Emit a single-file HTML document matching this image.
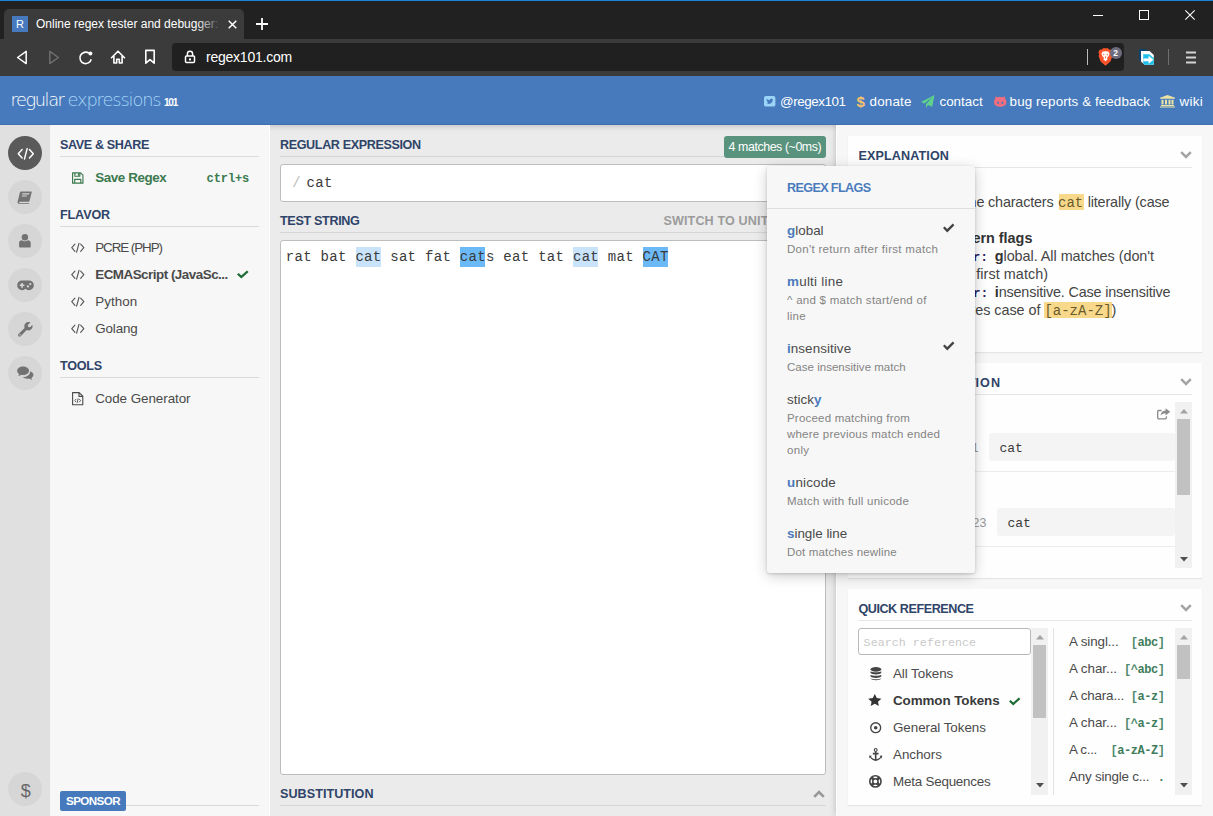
<!DOCTYPE html>
<html lang="en">
<head>
<meta charset="utf-8">
<title>Online regex tester and debugger: PHP, PCRE, Python, Golang and JavaScript</title>
<style>
*{box-sizing:border-box;margin:0;padding:0}
html,body{width:1213px;height:816px;overflow:hidden}
html{background:#ebebeb}
body{position:relative;font-family:"Liberation Sans",sans-serif;font-size:13px;color:#4a4a4a}
.abs{position:absolute}
.grp{position:absolute;left:0;top:0;width:1213px;height:816px}
.mono{font-family:"Liberation Mono",monospace}
svg{display:block;position:absolute;overflow:visible}
.t{position:absolute;white-space:nowrap;line-height:1}
/* browser chrome */
#topline{left:0;top:0;width:1213px;height:1px;background:#1b84d8}
#tabstrip{left:0;top:1px;width:1213px;height:38px;background:#212121}
#tab{left:4px;top:9px;width:240px;height:31px;background:#3b3b3b;border-radius:5px 5px 0 0}
#toolbar{left:0;top:39px;width:1213px;height:37px;background:#3b3b3b}
#urlbox{left:172px;top:43px;width:952px;height:28px;background:#202020;border-radius:4px}
#favicon{left:12px;top:16px;width:16px;height:16px;background:#4679bd;color:#fff;font-size:11px;text-align:center;line-height:16px}
/* header */
#hdr{z-index:5}
#flags{z-index:6}
#hdrbg{left:0;top:76px;width:1213px;height:49px;background:#467abc;border-bottom:1px solid #3e70b2}
.lnk{color:#fff;font-size:13.4px;top:94.6px}
/* rail */
#railbg{left:0;top:125px;width:50px;height:691px;background:#e0e0e0;z-index:-1}
.circ{position:absolute;left:8px;width:34px;height:34px;border-radius:50%;background:#d6d6d6}
.circ.on{background:#5a5a5a}
/* panels */
#leftbg{left:50px;top:125px;width:220px;height:691px;background:#f7f7f7;border-right:1px solid #fdfdfd;z-index:-1}
#centerbg{left:270px;top:125px;width:566px;height:691px;background:#ebebeb;z-index:-3}
#hdrshadow{left:0;top:76px;width:1213px;height:49px;box-shadow:0 1px 6px rgba(0,0,0,.2);z-index:-2}
#rightbg{left:836px;top:125px;width:377px;height:691px;background:#f7f7f7;border-left:1px solid #fdfdfd;box-shadow:0 0 6px rgba(0,0,0,.22);z-index:-1}
.h{position:absolute;white-space:nowrap;font-weight:700;font-size:12.6px;line-height:1;color:#2f4468}
.hr{position:absolute;height:1px;background:#dadada}
.li{position:absolute;white-space:nowrap;font-size:13.4px;line-height:1;color:#4a4a4a}
.box{position:absolute;background:#fff;border:1px solid #bdbdbd;border-radius:3px}
.card{position:absolute;left:848px;width:354px;background:#fefefe;box-shadow:0 1px 1px rgba(0,0,0,.07)}
.sbar{position:absolute;width:17px;background:#f1f1f1}
.thumb{position:absolute;left:2px;width:13px;background:#c1c1c1}
.ex{position:absolute;white-space:nowrap;font-size:14.4px;line-height:1;color:#454545}
.tok{font-family:"Liberation Mono",monospace;font-size:14px;background:#f8d98b;color:#6a5a2c}
.mod{font-family:"Liberation Mono",monospace;font-size:13px;font-weight:700;color:#2b2160}
/* popup */
#popup{left:767px;top:166px;width:208px;height:407px;background:#f7f7f7;border-radius:3px;box-shadow:0 1px 3px rgba(0,0,0,.16),0 3px 14px rgba(0,0,0,.2)}
.fn{position:absolute;left:787px;white-space:nowrap;font-size:13.4px;line-height:1;color:#4a4a4a}
.fn b{color:#4a7bbd}
.fd{position:absolute;left:787px;font-size:11.5px;line-height:1;color:#848484;white-space:nowrap}
.qt{position:absolute;white-space:nowrap;line-height:1;font-family:"Liberation Mono",monospace;font-size:12px;letter-spacing:-.45px;font-weight:700;color:#3f7d5c;right:48.4px}
.qt i{font-style:normal;color:#4f8a6c}
</style>
</head>
<body>
<!-- ===== browser chrome ===== -->
<div class="grp" id="chrome">
<div class="abs" id="tabstrip"></div>
<div class="abs" id="topline"></div>
<div class="abs" id="tab"></div>
<div class="abs" id="toolbar"></div>
<div class="abs" id="urlbox"></div>
<div class="abs" id="favicon">R</div>
<div class="t" id="tabtitle" style="left:36px;top:14.00px;font-size:12px;line-height:20px;height:20px;color:#fff;width:182px;overflow:hidden">Online regex tester and debugger: PHP, PCRE</div>
<div class="t" id="urltext" style="letter-spacing:-0.23px;left:206px;top:50.00px;font-size:14px;color:#fff">regex101.com</div>
<div class="abs" style="left:196px;top:10px;width:26px;height:28px;background:linear-gradient(90deg,rgba(59,59,59,0),#3b3b3b)"></div>
<svg style="left:228px;top:20px" width="9" height="9" viewBox="0 0 9 9"><path d="M0.7 0.7L8.3 8.3M8.3 0.7L0.7 8.3" stroke="#fff" stroke-width="1.5" fill="none"/></svg>
<svg style="left:256px;top:18px" width="12" height="12" viewBox="0 0 12 12"><path d="M6 0V12M0 6H12" stroke="#fff" stroke-width="1.8" fill="none"/></svg>
<div class="abs" style="left:1093px;top:15px;width:10px;height:1px;background:#fff"></div>
<svg style="left:1139px;top:10px" width="10" height="10" viewBox="0 0 10 10"><rect x="0.5" y="0.5" width="9" height="9" stroke="#fff" stroke-width="1" fill="none"/></svg>
<svg style="left:1185px;top:10px" width="10" height="10" viewBox="0 0 10 10"><path d="M0.3 0.3L9.7 9.7M9.7 0.3L0.3 9.7" stroke="#fff" stroke-width="1.1" fill="none"/></svg>
<svg style="left:16px;top:50px" width="12" height="15" viewBox="0 0 12 15"><path d="M10.2 1.4V13.6L1.6 7.5Z" stroke="#fff" stroke-width="1.5" fill="none" stroke-linejoin="round"/></svg>
<svg style="left:48px;top:50px" width="12" height="15" viewBox="0 0 12 15"><path d="M1.8 1.4V13.6L10.4 7.5Z" stroke="#6e6e6e" stroke-width="1.5" fill="none" stroke-linejoin="round"/></svg>
<svg style="left:78px;top:50px" width="16" height="15" viewBox="0 0 16 15"><path d="M13.2 9.2A5.7 5.7 0 1 1 10.9 3.2" stroke="#fff" stroke-width="1.6" fill="none"/><circle cx="12.4" cy="3.6" r="2" fill="#fff"/></svg>
<svg style="left:110px;top:49px" width="16" height="16" viewBox="0 0 16 16"><path d="M1.5 8.8L8 2.2L14.5 8.8M3.9 7.2V14H6.7V10.2H9.3V14H12.1V7.2" stroke="#fff" stroke-width="1.6" fill="none" stroke-linejoin="round" stroke-linecap="round"/></svg>
<svg style="left:144px;top:49px" width="12" height="16" viewBox="0 0 12 16"><path d="M1.8 1.4H10.2V14.2L6 10.6L1.8 14.2Z" stroke="#fff" stroke-width="1.6" fill="none" stroke-linejoin="round"/></svg>
<svg style="left:184px;top:50px" width="12" height="14" viewBox="0 0 12 14"><path d="M3.4 6V3.8A2.6 2.6 0 0 1 8.6 3.8V6" stroke="#fff" stroke-width="1.5" fill="none"/><rect x="1.5" y="6" width="9" height="6.6" rx="1" stroke="#fff" stroke-width="1.5" fill="none"/><rect x="5" y="8.4" width="2" height="2" fill="#fff"/></svg>
<div class="abs" style="left:1087px;top:49px;width:1px;height:16px;background:#bbb"></div>
<svg style="left:1098px;top:48px" width="15" height="18" viewBox="0 0 15 18"><path d="M7.5 0.3L10 0.3L11.3 1.8L13.2 1.5L14.6 4.2L13.9 6.2L14.4 8L12.4 13.6L7.5 17.7L2.6 13.6L0.6 8L1.1 6.2L0.4 4.2L1.8 1.5L3.7 1.8L5 0.3Z" fill="#fb542b"/><path d="M7.5 3.2L10.2 3.6L11.6 5.8L10.4 8.6L9 10L9.6 11.6L7.5 13.2L5.4 11.6L6 10L4.6 8.6L3.4 5.8L4.8 3.6Z" fill="#fff"/><path d="M5 5.6L6.6 6.4L5.6 7.4ZM10 5.6L8.4 6.4L9.4 7.4ZM6.8 8.4H8.2L7.5 11Z" fill="#fb542b"/></svg>
<div class="abs" style="left:1110px;top:47px;width:12px;height:12px;border-radius:6px;background:#6c6c7e"></div>
<div class="t" style="left:1113.3px;top:49px;font-size:8.5px;font-weight:700;color:#fff">2</div>
<svg style="left:1139px;top:49px" width="16" height="17" viewBox="0 0 16 17"><path d="M0 0H6.4L9.4 2.6V11.8H0Z" fill="#0b446e"/><path d="M2 2H10.6L14.8 6V15.8H5.6L2 12.4Z" fill="#fff"/><path d="M4.2 5.2H10.4L14.8 9.2V15.8H5.6L4.2 14.4Z" fill="#1fc1ea"/><path d="M4.4 9.4H9.6V6.8L14.4 10.8L9.6 14.8V12.2H4.4Z" fill="#fff"/></svg>
<div class="abs" style="left:1168px;top:49px;width:1px;height:16px;background:#707070"></div>
<svg style="left:1186px;top:51px" width="10" height="13" viewBox="0 0 10 13"><path d="M0 1.4H10M0 6.5H10M0 11.6H10" stroke="#d4d4d4" stroke-width="2"/></svg>
</div>
<!-- ===== site header ===== -->
<div class="grp" id="hdr">
<div class="abs" id="hdrbg"></div>
<div class="t" id="logo1" style="letter-spacing:-1.42px;left:10.5px;top:91.00px;font-family:'DejaVu Sans Light','DejaVu Sans',sans-serif;font-weight:200;font-size:17.8px;color:#fff">regular</div>
<div class="t" id="logo2" style="letter-spacing:-1.11px;left:67.5px;top:91.00px;font-family:'DejaVu Sans Light','DejaVu Sans',sans-serif;font-weight:200;font-size:17.8px;color:#a9d6f7">expressions</div>
<div class="t" id="logo3" style="letter-spacing:-1.23px;left:164px;top:98.01px;font-size:10px;font-weight:700;color:#fff">101</div>
<svg style="left:764px;top:96px" width="11.4" height="10.6" viewBox="0 0 11 11" preserveAspectRatio="none"><rect width="11" height="11" rx="2" fill="#9ad4f7"/><path d="M2 7.9C4.8 9.4 8.4 7.6 8.3 4.4L9 3.6L8.2 3.7L8.7 2.9L7.9 3.2C7.2 2.5 5.7 2.8 5.7 4.2C4.4 4.2 3.3 3.5 2.7 2.8C2.3 3.6 2.6 4.4 3.1 4.8L2.5 4.7C2.6 5.5 3.1 6 3.8 6.2L3.2 6.3C3.5 6.9 4 7.2 4.6 7.2C3.8 7.8 2.9 8 2 7.9Z" fill="#467abc"/></svg>
<div class="t lnk" style="letter-spacing:-0.44px;left:780px;top:95.01px">@regex101</div>
<div class="t" style="left:856.6px;top:94.00px;font-size:15px;font-weight:700;color:#f7c36f">$</div>
<div class="t lnk" style="letter-spacing:0.17px;left:869.6px;top:95.01px">donate</div>
<svg style="left:921px;top:94.5px" width="13.5" height="13.3" viewBox="0 0 14 13" preserveAspectRatio="none"><path d="M14 0L11.6 11.6L7.2 9.8L5.2 12.8V9L12 2L3.6 8.4L0 6.9Z" fill="#5fd38a"/></svg>
<div class="t lnk" style="letter-spacing:0.04px;left:939.4px;top:95.01px">contact</div>
<svg style="left:993.5px;top:96px" width="12.4" height="10.8" viewBox="0 0 13 11" preserveAspectRatio="none"><path d="M1.6 0.2L3.6 1.2C5.4 0.8 7.6 0.8 9.4 1.2L11.4 0.2L11.6 2.6C12.6 3.8 13 5 13 6.2C13 9.6 10.2 11 6.5 11C2.8 11 0 9.6 0 6.2C0 5 0.4 3.8 1.4 2.6Z" fill="#f26d7d"/><ellipse cx="4.2" cy="7" rx="1" ry="1.5" fill="#467abc"/><ellipse cx="8.8" cy="7" rx="1" ry="1.5" fill="#467abc"/></svg>
<div class="t lnk" style="letter-spacing:0.09px;left:1009.6px;top:95.01px">bug reports &amp; feedback</div>
<svg style="left:1160px;top:95px" width="15" height="12.4" viewBox="0 0 15 13" preserveAspectRatio="none"><path d="M7.5 0L15 3V4H0V3ZM1.5 5H3.5V10H1.5ZM5 5H7V10H5ZM8.5 5H10.5V10H8.5ZM11.5 5H13.5V10H11.5ZM1 10.5H14V11.5H1ZM0 12H15V13H0Z" fill="#e9e4a6"/></svg>
<div class="t lnk" style="letter-spacing:0.29px;left:1179.6px;top:95.01px">wiki</div>
</div>
<!-- ===== rail ===== -->
<div class="grp" id="rail">
<div class="abs" id="railbg"></div>
<div class="circ on" style="top:136px"></div>
<svg style="left:16.5px;top:147.5px" width="17.6" height="11.6" viewBox="0 0 18 12"><path d="M5.2 1.6L1.2 6L5.2 10.4M12.8 1.6L16.8 6L12.8 10.4M10.4 0.6L7.6 11.4" stroke="#fff" stroke-width="1.5" fill="none" stroke-linecap="round" stroke-linejoin="round"/></svg>
<div class="circ" style="top:180px"></div>
<svg style="left:17.4px;top:190.6px" width="15" height="12.8" viewBox="0 0 15 13"><path d="M4.4 0.4H14.2C14.8 0.4 15 0.8 14.8 1.4L12.6 10.2C12.4 10.8 12 11 11.4 11H2.6C2.2 11 2 11.3 2 11.6C2 11.9 2.2 12.1 2.6 12.1H12.2V12.9H2C0.8 12.9 0.2 12 0.5 10.9L2.8 1.6C3 0.8 3.6 0.4 4.4 0.4ZM5.4 2.4L5.1 3.5H12.3L12.6 2.4ZM4.9 4.5L4.6 5.6H9.8L10.1 4.5Z" fill="#727272" fill-rule="evenodd"/></svg>
<div class="circ" style="top:224px"></div>
<svg style="left:19.2px;top:234.4px" width="11.8" height="13.6" viewBox="0 0 12 14"><circle cx="6" cy="3.3" r="3.3" fill="#727272"/><path d="M0 13V9.2C0 7.4 1.4 6.4 2.8 6.4C3.6 7 4.8 7.4 6 7.4C7.2 7.4 8.4 7 9.2 6.4C10.6 6.4 12 7.4 12 9.2V13C12 13.6 11.6 14 11 14H1C0.4 14 0 13.6 0 13Z" fill="#727272"/></svg>
<div class="circ" style="top:268px"></div>
<svg style="left:16.6px;top:279.6px" width="17" height="10.8" viewBox="0 0 17 11"><path d="M5 0.4H12A5 5 0 0 1 12 10.4C10.8 10.4 9.8 10 9 9.2H8C7.2 10 6.2 10.4 5 10.4A5 5 0 0 1 5 0.4Z" fill="#727272"/><path d="M4.2 3V4.6H2.6V6.2H4.2V7.8H5.8V6.2H7.4V4.6H5.8V3Z" fill="#d6d6d6"/><circle cx="11" cy="6.6" r="1.15" fill="#d6d6d6"/><circle cx="13.4" cy="4.2" r="1.15" fill="#d6d6d6"/></svg>
<div class="circ" style="top:312px"></div>
<svg style="left:18px;top:321.6px" width="15" height="15" viewBox="0 0 15 15"><path d="M14.6 4.2C14.6 6.6 12.6 8.4 10.4 8.4C9.8 8.4 9.2 8.3 8.7 8.1L2.6 14.2C2 14.8 1 14.8 0.5 14.2C-0.1 13.6 -0.1 12.7 0.5 12.1L6.6 6C6.4 5.5 6.3 4.9 6.3 4.3C6.3 1.9 8.2 0.1 10.5 0.1C11.2 0.1 11.8 0.2 12.4 0.5L9.8 3.1L10.2 4.9L12 5.3L14.3 2.9C14.5 3.3 14.6 3.8 14.6 4.2ZM2 13.4A0.7 0.7 0 1 0 2 12A0.7 0.7 0 0 0 2 13.4Z" fill="#727272" fill-rule="evenodd"/></svg>
<div class="circ" style="top:356px"></div>
<svg style="left:16.8px;top:366.4px" width="16.6" height="13.4" viewBox="0 0 17 14"><path d="M6.2 0.4C9.6 0.4 12.4 2.4 12.4 4.9C12.4 7.4 9.6 9.4 6.2 9.4C5.6 9.4 5 9.3 4.5 9.2C3.6 9.9 2.4 10.4 1 10.5C1.6 9.9 2 9.2 2.2 8.4C0.9 7.6 0 6.3 0 4.9C0 2.4 2.8 0.4 6.2 0.4Z" fill="#727272"/><path d="M13.7 5.4C15.6 6.2 17 7.6 17 9.2C17 10.6 16.1 11.8 14.8 12.6C15 13.3 15.4 13.8 16 14.4C14.6 14.3 13.4 13.8 12.5 13.1C12 13.2 11.4 13.3 10.8 13.3C8.8 13.3 7 12.6 5.9 11.5C6 11.5 6.1 11.5 6.2 11.5C10.4 11.5 13.8 8.8 13.7 5.4Z" fill="#727272"/></svg>
<div class="circ" style="top:772px"></div>
<div class="t" style="left:20.8px;top:782.00px;font-size:18px;color:#666">$</div>
</div>
<!-- ===== left panel ===== -->
<div class="grp" id="left">
<div class="abs" id="leftbg"></div>
<div class="h" style="letter-spacing:-0.38px;left:60px;top:139.01px">SAVE &amp; SHARE</div>
<div class="hr" style="left:60px;top:156px;width:199px"></div>
<svg style="left:72px;top:171.6px" width="11.5" height="12" viewBox="0 0 12 12"><path d="M0.6 0.6H9L11.4 3V11.4H0.6ZM3 0.6V4.2H8.2V0.6M2.8 11.4V7.4H9.2V11.4" stroke="#3b7a4e" stroke-width="1.2" fill="none" stroke-linejoin="round"/><rect x="6.2" y="1.2" width="1.4" height="2.4" fill="#3b7a4e"/></svg>
<div class="li" style="letter-spacing:-0.40px;left:95.2px;top:171.01px;font-weight:700;color:#3b7a4e">Save Regex</div>
<div class="t mono" style="letter-spacing:-0.10px;left:206.6px;top:173.01px;font-size:12px;font-weight:700;color:#3b7a4e">ctrl+s</div>
<div class="h" style="letter-spacing:-0.14px;left:60px;top:209.01px">FLAVOR</div>
<div class="hr" style="left:60px;top:226px;width:199px"></div>
<svg class="ci" style="left:71px;top:243.4px" width="13.6" height="9.4" viewBox="0 0 18 12" preserveAspectRatio="none"><path d="M5.2 1.4L1 6L5.2 10.6M12.8 1.4L17 6L12.8 10.6M10.6 0.4L7.4 11.6" stroke="#555" stroke-width="1.5" fill="none" stroke-linecap="round" stroke-linejoin="round"/></svg>
<div class="li" style="letter-spacing:-1.06px;left:95.2px;top:241.01px">PCRE (PHP)</div>
<svg class="ci" style="left:71px;top:270.4px" width="13.6" height="9.4" viewBox="0 0 18 12" preserveAspectRatio="none"><path d="M5.2 1.4L1 6L5.2 10.6M12.8 1.4L17 6L12.8 10.6M10.6 0.4L7.4 11.6" stroke="#555" stroke-width="1.5" fill="none" stroke-linecap="round" stroke-linejoin="round"/></svg>
<div class="li" style="letter-spacing:-0.49px;left:95.2px;top:268.01px;font-weight:700">ECMAScript (JavaSc...</div>
<svg style="left:237px;top:270.2px" width="11.6" height="8.6" viewBox="0 0 12 9.7" preserveAspectRatio="none"><path d="M0 5.2L1.7 3.5L4.5 6.3L10.3 0.5L12 2.2L4.5 9.7Z" fill="#1e6b35"/></svg>
<svg class="ci" style="left:71px;top:297.4px" width="13.6" height="9.4" viewBox="0 0 18 12" preserveAspectRatio="none"><path d="M5.2 1.4L1 6L5.2 10.6M12.8 1.4L17 6L12.8 10.6M10.6 0.4L7.4 11.6" stroke="#555" stroke-width="1.5" fill="none" stroke-linecap="round" stroke-linejoin="round"/></svg>
<div class="li" style="letter-spacing:0.05px;left:95.2px;top:295.01px">Python</div>
<svg class="ci" style="left:71px;top:324.4px" width="13.6" height="9.4" viewBox="0 0 18 12" preserveAspectRatio="none"><path d="M5.2 1.4L1 6L5.2 10.6M12.8 1.4L17 6L12.8 10.6M10.6 0.4L7.4 11.6" stroke="#555" stroke-width="1.5" fill="none" stroke-linecap="round" stroke-linejoin="round"/></svg>
<div class="li" style="letter-spacing:-0.11px;left:95.2px;top:322.01px">Golang</div>
<div class="h" style="letter-spacing:-0.23px;left:60px;top:360.01px">TOOLS</div>
<div class="hr" style="left:60px;top:377px;width:199px"></div>
<svg style="left:71.6px;top:392.4px" width="11.4" height="13.4" viewBox="0 0 11.4 13.4"><path d="M0.6 0.6H7.2L10.8 4.2V12.8H0.6ZM7 0.6V4.4H10.8" stroke="#4a4a4a" stroke-width="1.1" fill="none" stroke-linejoin="round"/><path d="M4.2 7L2.8 8.6L4.2 10.2M7.2 7L8.6 8.6L7.2 10.2M6.2 6.4L5.2 10.8" stroke="#4a4a4a" stroke-width="0.9" fill="none"/></svg>
<div class="li" style="letter-spacing:-0.05px;left:95.2px;top:392.01px">Code Generator</div>
<div class="hr" style="left:126px;top:805px;width:133px"></div>
<div class="abs" style="left:60px;top:791px;width:66px;height:20px;background:#467abc;border-radius:2px"></div>
<div class="t" style="letter-spacing:-0.57px;left:66px;top:795.01px;font-size:11.6px;font-weight:700;color:#fff">SPONSOR</div>
</div>
<!-- ===== center ===== -->
<div class="grp" id="center">
<div class="abs" id="centerbg"></div>
<div class="abs" id="hdrshadow"></div>
<div class="h" style="letter-spacing:-0.39px;left:280px;top:139.01px">REGULAR EXPRESSION</div>
<div class="hr" style="left:280px;top:156px;width:546px;background:#d6d6d6"></div>
<div class="abs" style="left:724px;top:136px;width:102px;height:22px;background:#5a937d;border-radius:3px"></div>
<div class="t" style="letter-spacing:-0.43px;left:728.6px;top:141.01px;font-size:12.4px;color:#fff">4 matches (~0ms)</div>
<div class="box" style="left:280px;top:164px;width:546px;height:38px"></div>
<div class="t mono" style="left:292.2px;top:176.00px;font-size:14px;color:#bdbdbd">/</div>
<div class="t mono" style="left:306.6px;top:176.00px;font-size:14px;letter-spacing:.3px;color:#3a3a3a">cat</div>
<div class="h" style="letter-spacing:-0.34px;left:280px;top:215.01px">TEST STRING</div>
<div class="h" style="letter-spacing:0.13px;left:663.4px;top:215.01px;color:#9b9b9b">SWITCH TO UNIT TESTS</div>
<div class="hr" style="left:280px;top:232px;width:546px;background:#d6d6d6"></div>
<div class="box" style="left:280px;top:240px;width:546px;height:535px"></div>
<div class="abs" style="left:355.8px;top:247px;width:25.2px;height:20px;background:#c9e3fb"></div>
<div class="abs" style="left:460.2px;top:247px;width:25.2px;height:20px;background:#6cb9f8"></div>
<div class="abs" style="left:573.2px;top:247px;width:25.2px;height:20px;background:#c9e3fb"></div>
<div class="abs" style="left:642.8px;top:247px;width:25.2px;height:20px;background:#6cb9f8"></div>
<div class="t mono" style="letter-spacing:0.30px;left:285.8px;top:250.00px;font-size:14px;color:#3a3a3a">rat bat cat sat fat cats eat tat cat mat CAT</div>
<div class="h" style="letter-spacing:0.04px;left:280px;top:788.01px">SUBSTITUTION</div>
<div class="hr" style="left:280px;top:805px;width:546px;background:#d6d6d6"></div>
<svg style="left:813.4px;top:789.6px" width="12" height="8" viewBox="0 0 12 8"><path d="M1.2 6.8L6 2L10.8 6.8" stroke="#979797" stroke-width="2.6" fill="none"/></svg>
</div>
<!-- ===== right ===== -->
<div class="grp" id="right">
<div class="abs" id="rightbg"></div>
<!-- explanation -->
<div class="card" style="top:136px;height:216px"></div>
<div class="h" style="letter-spacing:0.12px;left:858.4px;top:150.01px">EXPLANATION</div>
<div class="hr" style="left:858px;top:167px;width:334px;background:#e6e6e6"></div>
<svg style="left:1180px;top:151.4px" width="12" height="8" viewBox="0 0 12 8"><path d="M1.2 1.2L6 6L10.8 1.2" stroke="#a4a4a4" stroke-width="2.5" fill="none"/></svg>
<div class="abs" style="left:1058.6px;top:194px;width:25.6px;height:16px;background:#f8d98b"></div>
<div class="ex" style="right:43.6px;top:195.00px"><span class="mono" style="font-size:14px">/cat/</span> matches th<span style="letter-spacing:-0.18px;">e characters</span><span class="mono" style="font-size:14px;color:#6a5a2c;padding:0 4.4px 0 4.6px">cat</span><span style="letter-spacing:-0.15px;">literally (case</span></div>
<div class="ex" style="left:868px;top:213.00px">insensitive)</div>
<div class="ex" style="right:180.6px;top:231.00px;font-weight:700;color:#333">Global pattern flags</div>
<div class="ex" style="right:59px;top:249.00px"><span class="mod">g modifier:</span><span style="display:inline-block;width:6.6px"></span><span style="letter-spacing:-0.04px;"><b style="color:#333">g</b>lobal. All matches (don't</span></div>
<div class="ex" style="right:164.8px;top:267.00px">return after <span style="letter-spacing:0.07px;">first match)</span></div>
<div class="ex" style="right:42.6px;top:285.00px"><span class="mod">i modifier:</span><span style="display:inline-block;width:6.6px"></span><span style="letter-spacing:-0.18px;"><b style="color:#333">i</b>nsensitive. Case insensitive</span></div>
<div class="abs" style="left:1044px;top:302px;width:67.6px;height:16px;background:#f8d98b"></div>
<div class="ex" style="right:96.6px;top:303.00px">match (igno<span style="letter-spacing:-0.04px;">res case of</span><span class="mono" style="font-size:14px;color:#6a5a2c;padding:0 0 0 4px">[a-zA-Z]</span>)</div>
<!-- match information -->
<div class="card" style="top:363px;height:214.6px"></div>
<div class="h" style="left:858.4px;top:377.01px"><span style="letter-spacing:0.26px;">MATCH INFORMAT</span><span style="letter-spacing:1.00px;">ION</span></div>
<div class="hr" style="left:858px;top:394px;width:334px;background:#e6e6e6"></div>
<svg style="left:1180px;top:378px" width="12" height="8" viewBox="0 0 12 8"><path d="M1.2 1.2L6 6L10.8 1.2" stroke="#a4a4a4" stroke-width="2.5" fill="none"/></svg>
<svg style="left:1157px;top:408.4px" width="13.4" height="11.6" viewBox="0 0 13.4 11.6"><path d="M9.4 8.2V9.8C9.4 10.4 9 10.9 8.4 10.9H1.8C1.2 10.9 0.7 10.4 0.7 9.8V3.6C0.7 3 1.2 2.5 1.8 2.5H4.6" stroke="#8a8a8a" stroke-width="1.3" fill="none"/><path d="M8.6 0.2L13.2 3.8L8.6 7.4V5.2C6 5.2 4.6 6 3.6 7.8C3.8 4.6 5.4 2.6 8.6 2.4Z" fill="#8a8a8a"/></svg>
<div class="t" style="left:858px;top:411px;font-size:13px;font-weight:700;color:#4a4a4a">Match 1</div>
<div class="t" style="left:868px;top:441.6px;font-size:13px;color:#4a4a4a">Full match</div>
<div class="t" style="left:858px;top:486px;font-size:13px;font-weight:700;color:#4a4a4a">Match 2</div>
<div class="t" style="left:868px;top:516.4px;font-size:13px;color:#4a4a4a">Full match</div>
<div class="t" style="right:234.4px;top:442.01px;font-size:12.4px;color:#9a9a9a">8-11</div>
<div class="abs" style="left:989px;top:433px;width:185.6px;height:28px;background:#f4f4f4;border-radius:3px"></div>
<div class="t mono" style="left:999.4px;top:442.00px;font-size:13px;color:#3a3a3a">cat</div>
<div class="hr" style="left:858px;top:471px;width:317px;background:#ececec"></div>
<div class="t" style="right:226.6px;top:517.01px;font-size:12.4px;color:#9a9a9a">20-23</div>
<div class="abs" style="left:997px;top:507.6px;width:177.6px;height:28px;background:#f4f4f4;border-radius:3px"></div>
<div class="t mono" style="left:1007.4px;top:517.00px;font-size:13px;color:#3a3a3a">cat</div>
<div class="hr" style="left:858px;top:546px;width:317px;background:#ececec"></div>
<div class="sbar" style="left:1175px;top:402px;height:166px"><div class="thumb" style="top:17px;height:76px"></div></div>
<svg style="left:1179.5px;top:408.6px" width="8" height="4.4" viewBox="0 0 8 4.4"><path d="M0 4.4L4 0L8 4.4Z" fill="#a3a3a3"/></svg>
<svg style="left:1179.5px;top:556.6px" width="8" height="4.4" viewBox="0 0 8 4.4"><path d="M0 0L4 4.4L8 0Z" fill="#505050"/></svg>
<!-- quick reference -->
<div class="card" style="top:589px;height:216px"></div>
<div class="h" style="letter-spacing:-0.44px;left:858.4px;top:603.00px">QUICK REFERENCE</div>
<div class="hr" style="left:858px;top:620px;width:334px;background:#e6e6e6"></div>
<svg style="left:1180px;top:604.4px" width="12" height="8" viewBox="0 0 12 8"><path d="M1.2 1.2L6 6L10.8 1.2" stroke="#a4a4a4" stroke-width="2.5" fill="none"/></svg>
<div class="box" style="left:858px;top:628px;width:173px;height:26.6px;border-color:#b9b9b9"></div>
<div class="t mono" style="letter-spacing:0.02px;left:863.6px;top:638.01px;font-size:11.7px;color:#c9c9c9">Search reference</div>
<div class="sbar" style="left:1031px;top:628px;height:167px"><div class="thumb" style="top:17.4px;height:73px"></div></div>
<svg style="left:1035.5px;top:634.6px" width="8" height="4.4" viewBox="0 0 8 4.4"><path d="M0 4.4L4 0L8 4.4Z" fill="#a3a3a3"/></svg>
<svg style="left:1035.5px;top:783.4px" width="8" height="4.4" viewBox="0 0 8 4.4"><path d="M0 0L4 4.4L8 0Z" fill="#505050"/></svg>
<div class="abs" style="left:1053.4px;top:628px;width:1px;height:167px;background:#e2e2e2"></div>
<div class="sbar" style="left:1175px;top:628px;height:167px"><div class="thumb" style="top:17.4px;height:33.4px"></div></div>
<svg style="left:1179.5px;top:634.6px" width="8" height="4.4" viewBox="0 0 8 4.4"><path d="M0 4.4L4 0L8 4.4Z" fill="#a3a3a3"/></svg>
<svg style="left:1179.5px;top:783.4px" width="8" height="4.4" viewBox="0 0 8 4.4"><path d="M0 0L4 4.4L8 0Z" fill="#505050"/></svg>
<svg style="left:869.8px;top:666.8px" width="11.8" height="13.2" viewBox="0 0 13.2 13" preserveAspectRatio="none"><ellipse cx="6.6" cy="2.3" rx="6" ry="2.3" fill="#444"/><path d="M0.6 4.2C2 5.6 11.2 5.6 12.6 4.2V6C11.2 7.8 2 7.8 0.6 6ZM0.6 7.6C2 9 11.2 9 12.6 7.6V9.4C11.2 11.2 2 11.2 0.6 9.4ZM0.6 11C2 12.4 11.2 12.4 12.6 11V11.4C11.2 13.5 2 13.5 0.6 11.4Z" fill="#444"/></svg>
<div class="li" style="letter-spacing:-0.06px;left:893px;top:667.01px">All Tokens</div>
<svg style="left:868.4px;top:694.4px" width="13.6" height="12" viewBox="0 0 13.6 12"><path d="M6.8 0L8.8 4.1L13.4 4.7L10 7.8L10.9 12L6.8 9.8L2.7 12L3.6 7.8L0.2 4.7L4.8 4.1Z" fill="#333"/></svg>
<div class="li" style="letter-spacing:-0.08px;left:893px;top:694.01px;font-weight:700;color:#3a3a3a">Common Tokens</div>
<svg style="left:1008.8px;top:696.6px" width="11.4" height="8.4" viewBox="0 0 12 9.7" preserveAspectRatio="none"><path d="M0 5.2L1.7 3.5L4.5 6.3L10.3 0.5L12 2.2L4.5 9.7Z" fill="#1e6b35"/></svg>
<svg style="left:870px;top:721.8px" width="11.4" height="11.4" viewBox="0 0 12 12"><circle cx="6" cy="6" r="5.2" stroke="#444" stroke-width="1.45" fill="none"/><circle cx="6" cy="6" r="1.9" fill="#444"/></svg>
<div class="li" style="letter-spacing:-0.05px;left:893px;top:721.01px">General Tokens</div>
<svg style="left:868.6px;top:748px" width="13.4" height="13" viewBox="0 0 13.4 13"><circle cx="6.7" cy="1.9" r="1.4" stroke="#444" stroke-width="1.1" fill="none"/><path d="M6.7 3.4V12M3.8 5.6H9.6" stroke="#444" stroke-width="1.6" fill="none"/><path d="M0.2 7.6L2.8 7.8L2 8.8C2.8 10.4 4.6 11.2 6.7 11.4C8.8 11.2 10.6 10.4 11.4 8.8L10.6 7.8L13.2 7.6L13 10.4L12.2 9.6C11.2 11.6 9 12.8 6.7 13C4.4 12.8 2.2 11.6 1.2 9.6L0.4 10.4Z" fill="#444"/></svg>
<div class="li" style="letter-spacing:-0.05px;left:893px;top:748.01px">Anchors</div>
<svg style="left:869px;top:775px" width="12.8" height="12.8" viewBox="0 0 12.8 12.8"><circle cx="6.4" cy="6.4" r="5.6" stroke="#444" stroke-width="1.6" fill="none"/><circle cx="6.4" cy="6.4" r="2.6" stroke="#444" stroke-width="1.5" fill="none"/><path d="M2.5 2.5L4.5 4.5M10.3 2.5L8.3 4.5M2.5 10.3L4.5 8.3M10.3 10.3L8.3 8.3" stroke="#444" stroke-width="2.8"/></svg>
<div class="li" style="letter-spacing:-0.21px;left:893px;top:775.01px">Meta Sequences</div>
<div class="li" style="letter-spacing:-0.10px;left:1069px;top:635.01px">A singl...</div>
<div class="qt" style="top:637.01px"><i>[</i>abc<i>]</i></div>
<div class="li" style="letter-spacing:-0.04px;left:1069px;top:662.01px">A char...</div>
<div class="qt" style="top:664.01px"><i>[^</i>abc<i>]</i></div>
<div class="li" style="letter-spacing:-0.14px;left:1069px;top:689.01px">A chara...</div>
<div class="qt" style="top:691.01px"><i>[</i>a-z<i>]</i></div>
<div class="li" style="letter-spacing:-0.04px;left:1069px;top:716.01px">A char...</div>
<div class="qt" style="top:718.01px"><i>[^</i>a-z<i>]</i></div>
<div class="li" style="letter-spacing:-0.30px;left:1069px;top:743.01px">A c...</div>
<div class="qt" style="top:745.01px"><i>[</i>a-zA-Z<i>]</i></div>
<div class="li" style="letter-spacing:-0.21px;left:1069px;top:770.01px">Any single c...</div>
<div class="qt" style="top:772.01px">.</div>

</div>
<!-- ===== popup ===== -->
<div class="grp" id="flags">
<div class="abs" id="popup"></div>
<div class="h" style="letter-spacing:-0.62px;left:787px;top:182.01px;color:#4a7bbd">REGEX FLAGS</div>
<div class="hr" style="left:767px;top:208px;width:208px;background:#dedede"></div>
<div class="fn" style="letter-spacing:0.02px;top:224.00px"><b>g</b>lobal</div>
<svg style="left:942.6px;top:223px" width="11.4" height="9.4" viewBox="0 0 12 9.7" preserveAspectRatio="none"><path d="M0 5.2L1.7 3.5L4.5 6.3L10.3 0.5L12 2.2L4.5 9.7Z" fill="#444"/></svg>
<div class="fd" style="letter-spacing:0.30px;top:244.00px">Don't return after first match</div>
<div class="fn" style="letter-spacing:0.26px;top:275.00px"><b>m</b>ulti line</div>
<div class="fd" style="letter-spacing:0.27px;top:295.00px">^ and $ match start/end of</div>
<div class="fd" style="letter-spacing:0.22px;top:311.00px">line</div>
<div class="fn" style="letter-spacing:0.08px;top:342.00px"><b>i</b>nsensitive</div>
<svg style="left:942.6px;top:341px" width="11.4" height="9.4" viewBox="0 0 12 9.7" preserveAspectRatio="none"><path d="M0 5.2L1.7 3.5L4.5 6.3L10.3 0.5L12 2.2L4.5 9.7Z" fill="#444"/></svg>
<div class="fd" style="letter-spacing:0.02px;top:362.00px">Case insensitive match</div>
<div class="fn" style="letter-spacing:0.02px;top:393.00px">stick<b>y</b></div>
<div class="fd" style="letter-spacing:0.20px;top:413.00px">Proceed matching from</div>
<div class="fd" style="letter-spacing:0.21px;top:429.00px">where previous match ended</div>
<div class="fd" style="letter-spacing:0.32px;top:445.00px">only</div>
<div class="fn" style="letter-spacing:0.19px;top:476.00px"><b>u</b>nicode</div>
<div class="fd" style="letter-spacing:0.25px;top:496.00px">Match with full unicode</div>
<div class="fn" style="letter-spacing:-0.01px;top:527.00px"><b>s</b>ingle line</div>
<div class="fd" style="letter-spacing:0.16px;top:547.00px">Dot matches newline</div>
</div>
</body>
</html>
